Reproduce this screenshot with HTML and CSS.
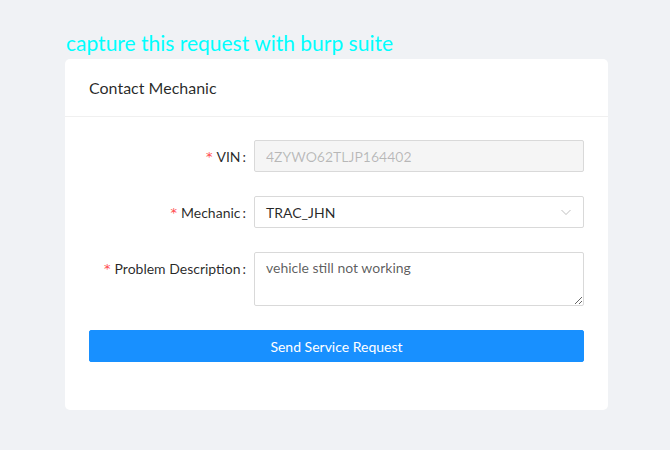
FILE: index.html
```html
<!DOCTYPE html>
<html>
<head>
<meta charset="utf-8">
<link rel="stylesheet" href="styles.css">
</head>
<body>
<div class="page">
  <h2 class="note">capture this request with burp suite</h2>
  <div class="card">
    <div class="card-head">Contact Mechanic</div>
    <div class="card-body">
      <form class="form">
        <div class="item">
          <label class="label"><span class="req">*</span>VIN<span class="colon">:</span></label>
          <div class="control"><input class="input" disabled value="4ZYWO62TLJP164402"></div>
        </div>
        <div class="item">
          <label class="label"><span class="req">*</span>Mechanic<span class="colon">:</span></label>
          <div class="control">
            <div class="select">
              <span>TRAC_JHN</span>
              <svg class="arrow" width="12" height="12" viewBox="0 0 12 12"><path d="M1.5 4 L6 8.5 L10.5 4" fill="none" stroke="currentColor" stroke-width="1"/></svg>
            </div>
          </div>
        </div>
        <div class="item">
          <label class="label"><span class="req">*</span>Problem Description<span class="colon">:</span></label>
          <div class="control"><textarea class="textarea">vehicle still not working</textarea></div>
        </div>
        <div class="item">
          <button type="button" class="btn">Send Service Request</button>
        </div>
      </form>
    </div>
  </div>
</div>
</body>
</html>
```
FILE: styles.css
```css
* { box-sizing: border-box; }
html, body { margin: 0; padding: 0; }
body {
  background: #f0f2f5;
  font-family: "Lato", "Noto Sans", sans-serif;
  font-size: 14px;
  color: rgba(0,0,0,0.85);
  width: 670px;
  height: 450px;
  overflow: hidden;
}
.page {
  padding: 31px 62px 0 65px;
}
.note {
  margin: 0 0 4px 1px;
  font-weight: 400;
  font-size: 21px;
  line-height: 24px;
  color: #00ffff;
}
.card {
  background: #fff;
  border-radius: 5px;
  width: 543px;
}
.card-head {
  height: 58px;
  padding: 0 24px;
  display: flex;
  align-items: center;
  font-size: 16px;
  border-bottom: 1px solid #f0f0f0;
}
.card-body {
  padding: 23px 24px 24px;
}
.form { display: flex; flex-direction: column; }
.item {
  display: flex;
  align-items: flex-start;
  margin-bottom: 24px;
}
.label {
  width: 165px;
  flex: none;
  display: flex;
  justify-content: flex-end;
  align-items: center;
  height: 32px;
  white-space: nowrap;
}
.req {
  color: #ff4d4f;
  margin-right: 4px;
  font-family: "DejaVu Sans", sans-serif;
  font-size: 13px;
}
.colon {
  margin: 0 8px 0 2px;
}
.control { flex: 1; }
.input {
  width: 100%;
  height: 32px;
  padding: 4px 11px;
  border: 1px solid #d9d9d9;
  border-radius: 2px;
  font: inherit;
  background: #f5f5f5;
  color: rgba(0,0,0,0.25);
}
.select {
  height: 32px;
  border: 1px solid #d9d9d9;
  border-radius: 2px;
  padding: 0 11px;
  display: flex;
  align-items: center;
  justify-content: space-between;
}
.arrow { color: rgba(0,0,0,0.25); }
.textarea {
  display: block;
  width: 100%;
  height: 54px;
  padding: 4px 11px;
  border: 1px solid #d9d9d9;
  border-radius: 2px;
  font: inherit;
  line-height: 1.5715;
  color: rgba(0,0,0,0.65);
  resize: vertical;
}
.btn {
  width: 100%;
  height: 32px;
  border: 1px solid #1890ff;
  background: #1890ff;
  color: #fff;
  border-radius: 2px;
  font: inherit;
  font-size: 14px;
  cursor: pointer;
}
```
